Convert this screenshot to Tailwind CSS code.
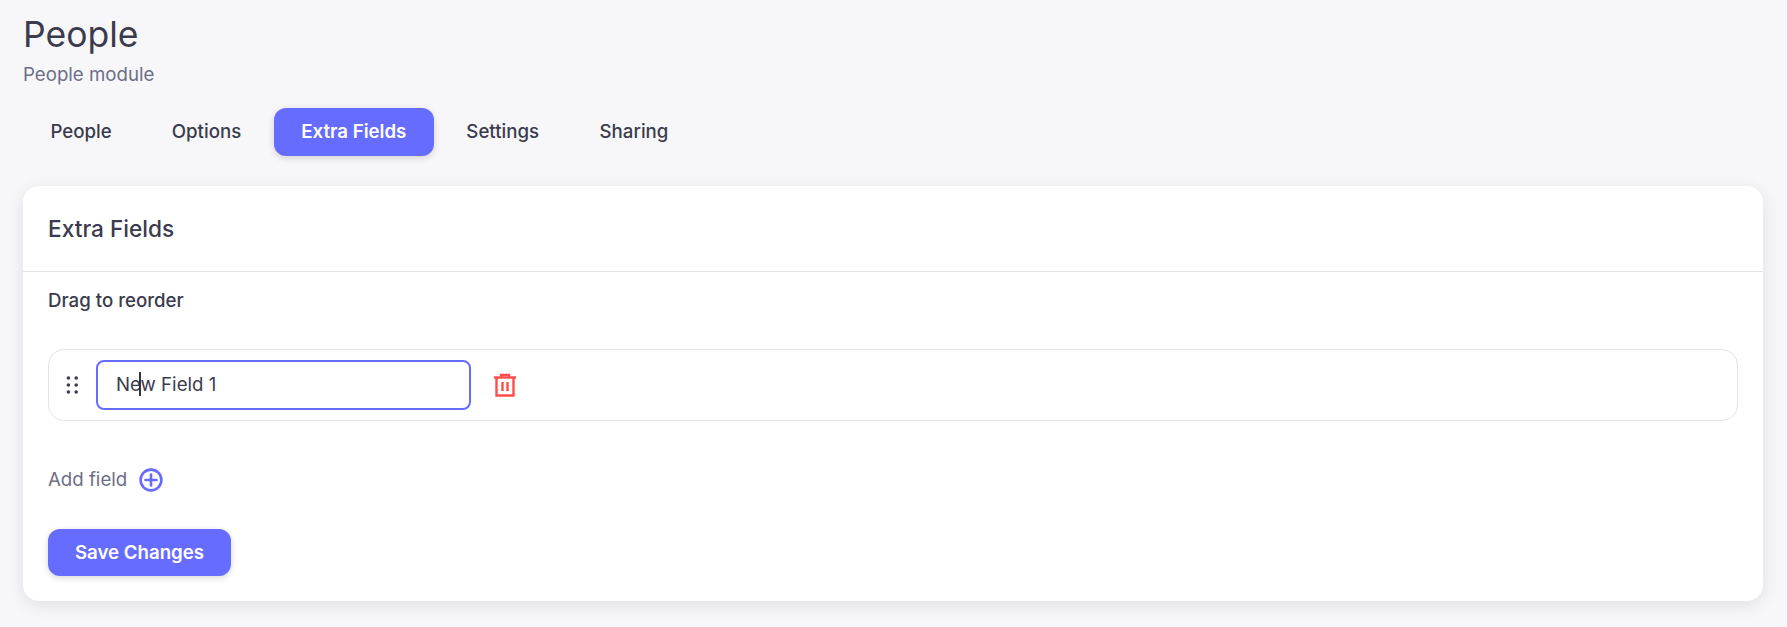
<!DOCTYPE html>
<html lang="en">
<head>
  <meta charset="UTF-8">
  <title>People</title>
  <script src="https://cdn.jsdelivr.net/npm/@tailwindcss/browser@4"></script>
</head>
<body class="bg-[#f7f7f9] font-['Inter',sans-serif] text-[#3a3b4d] h-[627px] overflow-hidden">
  <div class="pl-[23px] pr-[24px] pt-[12px]">
    <h1 class="text-[35.5px] leading-[46px] font-normal text-[#3a3b4d]">People</h1>
    <p class="text-[18.67px] leading-[24px] text-[#6d6e85] mt-[5px]">People module</p>

    <!-- tabs -->
    <div class="flex gap-[5px] mt-[21px] h-[48px] text-[18.67px] font-medium">
      <button class="px-[27.5px] rounded-xl">People</button>
      <button class="px-[27.5px] rounded-xl">Options</button>
      <button class="px-[27.5px] rounded-xl bg-[#666cff] text-white font-semibold shadow-[0_2px_6px_rgba(58,53,65,0.2)]">Extra Fields</button>
      <button class="px-[27.5px] rounded-xl">Settings</button>
      <button class="px-[28px] rounded-xl">Sharing</button>
    </div>

    <!-- card -->
    <div class="mt-[30px] h-[415px] bg-white rounded-2xl shadow-[0_4px_16px_rgba(58,53,90,0.12)]">
      <div class="h-[86px] px-[25px] flex items-center border-b border-[#e4e4e9]">
        <h2 class="text-[22.67px] font-medium text-[#3a3b4d]">Extra Fields</h2>
      </div>
      <div class="px-[25px]">
        <p class="mt-[17px] text-[18.67px] leading-[24px] font-medium text-[#3a3b4d]">Drag to reorder</p>

        <div class="mt-[36px] h-[72px] border border-[#e4e4e9] rounded-2xl flex items-center pl-[17px]">
          <svg class="w-[12px] h-[18px] text-[#3a3b4d]" viewBox="0 0 12 18" fill="currentColor">
            <circle cx="2.4" cy="2" r="1.8"/><circle cx="10.2" cy="2" r="1.8"/>
            <circle cx="2.4" cy="9" r="1.8"/><circle cx="10.2" cy="9" r="1.8"/>
            <circle cx="2.4" cy="16" r="1.8"/><circle cx="10.2" cy="16" r="1.8"/>
          </svg>
          <div class="ml-[18px] w-[375px] h-[50px] border-2 border-[#666cff] rounded-lg flex items-center pl-[18px] text-[18.67px] text-[#3a3b4d] bg-white">
            <span class="relative">New Field 1<span class="absolute left-[23px] top-[1px] w-[2px] h-[24px] bg-[#32334a]"></span></span>
          </div>
          <svg class="ml-[22px] w-[24px] h-[24px] text-[#ff4d49]" viewBox="0 0 24 24" fill="none" stroke="currentColor" stroke-width="2.4">
            <path d="M1 4.5h22" />
            <path d="M8 4V2h8v2" />
            <path d="M3.5 5v17.5h17V5" />
            <path d="M9.5 9v9M14.5 9v9" />
          </svg>
        </div>

        <div class="mt-[47px] flex items-center h-[24px]">
          <span class="text-[18.67px] text-[#6d6e85]">Add field</span>
          <svg class="ml-[12px] w-[24px] h-[24px] text-[#666cff]" viewBox="0 0 24 24" fill="none" stroke="currentColor" stroke-width="2.6" stroke-linecap="round">
            <circle cx="12" cy="12" r="10.4"/>
            <path d="M12 6.5v11M6.5 12h11"/>
          </svg>
        </div>

        <button class="mt-[37px] w-[183px] h-[47px] rounded-xl bg-[#666cff] text-white text-[18.67px] font-semibold shadow-[0_2px_6px_rgba(58,53,65,0.2)]">Save Changes</button>
      </div>
    </div>
  </div>
</body>
</html>
